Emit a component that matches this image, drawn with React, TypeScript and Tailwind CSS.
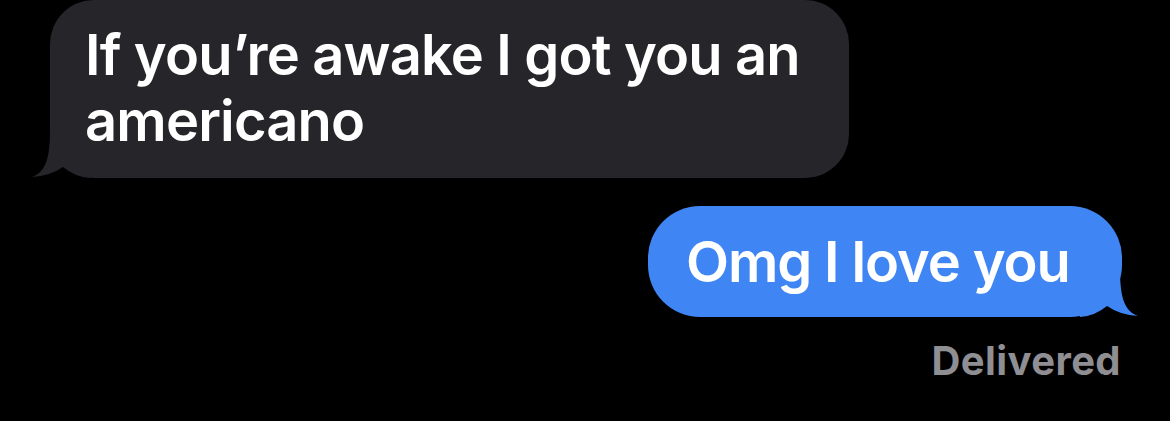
import React from "react";

const TAIL_PATH =
  "M18 0 C18 30 13 42 0 47 Q18 46 31 37 Q43 47 58 48 L58 0 Z";

function Tail({ color, side }: { color: string; side: "left" | "right" }) {
  return (
    <svg
      width="58"
      height="48"
      viewBox="0 0 58 48"
      className={
        side === "left"
          ? "absolute bottom-0 left-[-18px]"
          : "absolute bottom-0 right-[-16px] -scale-x-100"
      }
    >
      <path d={TAIL_PATH} fill={color} />
    </svg>
  );
}

export default function App() {
  return (
    <div
      className="flex h-[421px] w-full flex-col overflow-hidden bg-black"
      style={{ fontFamily: "Inter, 'Noto Sans', sans-serif" }}
    >
      {/* incoming message */}
      <div className="pl-[50px]">
        <div className="relative w-[799px] rounded-[44px] bg-[#26252a] pb-[24px] pl-[35px] pr-[30px] pt-[22px] text-[56px] font-semibold leading-[66px] tracking-[-0.015em] text-white">
          <Tail color="#26252a" side="left" />
          <p className="relative">If you’re awake I got you an americano</p>
        </div>
      </div>

      {/* outgoing message */}
      <div className="mt-[28px] flex flex-col items-end pr-[48px]">
        <div className="relative w-[474px] rounded-[52px] bg-[#3f86f4] py-[22.5px] pl-[38px] text-[56px] font-semibold leading-[66px] tracking-[-0.02em] text-white">
          <Tail color="#3f86f4" side="right" />
          <p className="relative">Omg I love you</p>
        </div>
        <div className="mt-[21px] pr-[1px] text-[40px] font-bold leading-[46px] tracking-[0.01em] text-[#8e8e93]">
          Delivered
        </div>
      </div>
    </div>
  );
}
